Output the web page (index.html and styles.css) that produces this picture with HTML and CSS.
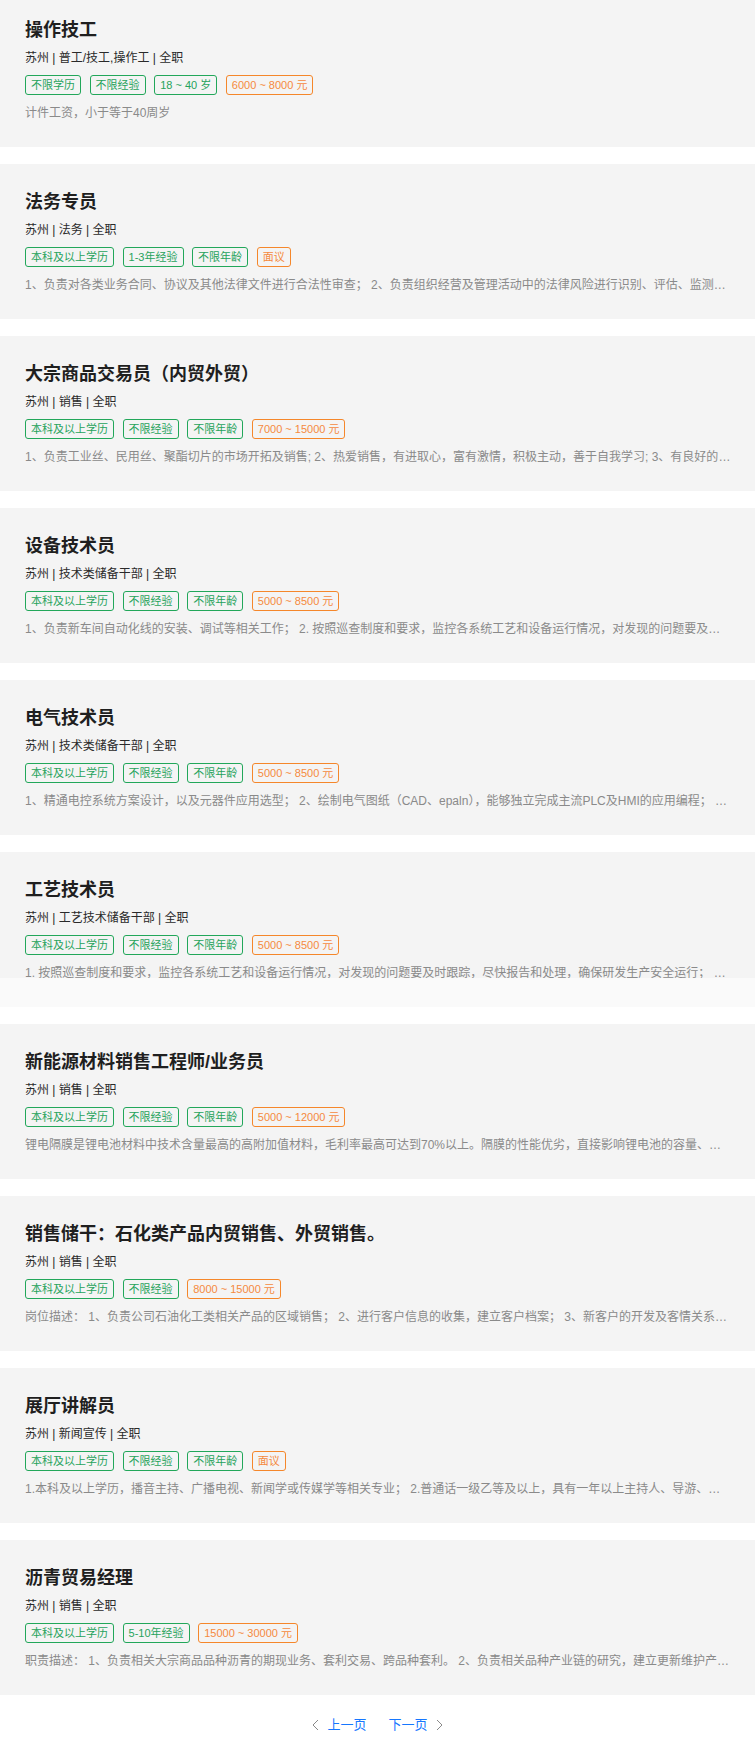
FILE: index.html
```html
<!DOCTYPE html>
<html lang="zh-CN">
<head>
<meta charset="utf-8">
<title>职位列表</title>
<link rel="stylesheet" href="styles.css">
</head>
<body>
<div class="list">
  <div class="card">
    <div class="title">操作技工</div>
    <div class="meta">苏州 | 普工/技工,操作工 | 全职</div>
    <div class="tags"><span class="tag">不限学历</span><span class="tag">不限经验</span><span class="tag">18 ~ 40 岁</span><span class="tag pay">6000 ~ 8000 元</span></div>
    <div class="desc">计件工资，小于等于40周岁</div>
  </div>
  <div class="card">
    <div class="title">法务专员</div>
    <div class="meta">苏州 | 法务 | 全职</div>
    <div class="tags"><span class="tag">本科及以上学历</span><span class="tag">1-3年经验</span><span class="tag">不限年龄</span><span class="tag pay">面议</span></div>
    <div class="desc">1、负责对各类业务合同、协议及其他法律文件进行合法性审查； 2、负责组织经营及管理活动中的法律风险进行识别、评估、监测和控制，提出法律意见；</div>
  </div>
  <div class="card">
    <div class="title">大宗商品交易员（内贸外贸）</div>
    <div class="meta">苏州 | 销售 | 全职</div>
    <div class="tags"><span class="tag">本科及以上学历</span><span class="tag">不限经验</span><span class="tag">不限年龄</span><span class="tag pay">7000 ~ 15000 元</span></div>
    <div class="desc">1、负责工业丝、民用丝、聚酯切片的市场开拓及销售; 2、热爱销售，有进取心，富有激情，积极主动，善于自我学习; 3、有良好的沟通能力和团队合作精神;</div>
  </div>
  <div class="card">
    <div class="title">设备技术员</div>
    <div class="meta">苏州 | 技术类储备干部 | 全职</div>
    <div class="tags"><span class="tag">本科及以上学历</span><span class="tag">不限经验</span><span class="tag">不限年龄</span><span class="tag pay">5000 ~ 8500 元</span></div>
    <div class="desc">1、负责新车间自动化线的安装、调试等相关工作； 2. 按照巡查制度和要求，监控各系统工艺和设备运行情况，对发现的问题要及时跟踪，尽快报告和处理；</div>
  </div>
  <div class="card">
    <div class="title">电气技术员</div>
    <div class="meta">苏州 | 技术类储备干部 | 全职</div>
    <div class="tags"><span class="tag">本科及以上学历</span><span class="tag">不限经验</span><span class="tag">不限年龄</span><span class="tag pay">5000 ~ 8500 元</span></div>
    <div class="desc">1、精通电控系统方案设计，以及元器件应用选型； 2、绘制电气图纸（CAD、epaln），能够独立完成主流PLC及HMI的应用编程； 3、负责现场调试工作；</div>
  </div>
  <div class="card">
    <div class="title">工艺技术员</div>
    <div class="meta">苏州 | 工艺技术储备干部 | 全职</div>
    <div class="tags"><span class="tag">本科及以上学历</span><span class="tag">不限经验</span><span class="tag">不限年龄</span><span class="tag pay">5000 ~ 8500 元</span></div>
    <div class="desc">1. 按照巡查制度和要求，监控各系统工艺和设备运行情况，对发现的问题要及时跟踪，尽快报告和处理，确保研发生产安全运行； 2. 负责工艺文件的编制；</div>
    <div class="fade"></div>
  </div>
  <div class="card">
    <div class="title">新能源材料销售工程师/业务员</div>
    <div class="meta">苏州 | 销售 | 全职</div>
    <div class="tags"><span class="tag">本科及以上学历</span><span class="tag">不限经验</span><span class="tag">不限年龄</span><span class="tag pay">5000 ~ 12000 元</span></div>
    <div class="desc">锂电隔膜是锂电池材料中技术含量最高的高附加值材料，毛利率最高可达到70%以上。隔膜的性能优劣，直接影响锂电池的容量、循环性能以及安全性能。</div>
  </div>
  <div class="card">
    <div class="title">销售储干：石化类产品内贸销售、外贸销售。</div>
    <div class="meta">苏州 | 销售 | 全职</div>
    <div class="tags"><span class="tag">本科及以上学历</span><span class="tag">不限经验</span><span class="tag pay">8000 ~ 15000 元</span></div>
    <div class="desc">岗位描述： 1、负责公司石油化工类相关产品的区域销售； 2、进行客户信息的收集，建立客户档案； 3、新客户的开发及客情关系维护；</div>
  </div>
  <div class="card">
    <div class="title">展厅讲解员</div>
    <div class="meta">苏州 | 新闻宣传 | 全职</div>
    <div class="tags"><span class="tag">本科及以上学历</span><span class="tag">不限经验</span><span class="tag">不限年龄</span><span class="tag pay">面议</span></div>
    <div class="desc">1.本科及以上学历，播音主持、广播电视、新闻学或传媒学等相关专业； 2.普通话一级乙等及以上，具有一年以上主持人、导游、展厅讲解员工作经验者优先；</div>
  </div>
  <div class="card">
    <div class="title">沥青贸易经理</div>
    <div class="meta">苏州 | 销售 | 全职</div>
    <div class="tags"><span class="tag">本科及以上学历</span><span class="tag">5-10年经验</span><span class="tag pay">15000 ~ 30000 元</span></div>
    <div class="desc">职责描述： 1、负责相关大宗商品品种沥青的期现业务、套利交易、跨品种套利。 2、负责相关品种产业链的研究，建立更新维护产业链数据库；</div>
  </div>
</div>
<div class="pager">
  <a class="page-link" href="#"><svg class="chev" viewBox="0 0 7 12" width="7" height="12"><path d="M6 1 L1 6 L6 11" fill="none" stroke="#8a8a8a" stroke-width="1"/></svg><span>上一页</span></a>
  <a class="page-link" href="#"><span>下一页</span><svg class="chev" viewBox="0 0 7 12" width="7" height="12"><path d="M1 1 L6 6 L1 11" fill="none" stroke="#8a8a8a" stroke-width="1"/></svg></a>
</div>
</body>
</html>
```

FILE: styles.css
```css
html, body {
  margin: 0;
  padding: 0;
  background: #ffffff;
}

body {
  font-family: "Liberation Sans", "Noto Sans CJK SC", sans-serif;
  color: #333;
  overflow: hidden;
}

.list {
  display: flex;
  flex-direction: column;
  gap: 17px;
  margin-top: -8px;
}

.card {
  position: relative;
  box-sizing: border-box;
  height: 155px;
  background: #f4f4f4;
  padding: 26px 24px 0 25px;
  display: flex;
  flex-direction: column;
}

.title {
  font-size: 18px;
  line-height: 24px;
  font-weight: 700;
  color: #1f1f1f;
}

.meta {
  margin-top: 7px;
  font-size: 12px;
  line-height: 18px;
  color: #2a2a2a;
  white-space: pre;
}

.tags {
  margin-top: 8px;
  display: flex;
  gap: 8.6px;
}

.tag {
  box-sizing: border-box;
  height: 20px;
  padding: 0 5px;
  border: 1px solid #22a75a;
  border-radius: 3px;
  color: #27a35c;
  font-size: 11px;
  line-height: 18px;
  white-space: nowrap;
}

.tag.pay {
  border-color: #f5872b;
  color: #f58a3e;
}

.desc {
  margin-top: 9px;
  font-size: 12px;
  line-height: 18px;
  color: #8a8a8a;
  white-space: nowrap;
  overflow: hidden;
  text-overflow: ellipsis;
}

.fade {
  position: absolute;
  left: 0;
  right: 0;
  top: 126px;
  bottom: 0;
  background: #fafafa;
}

.pager {
  display: flex;
  justify-content: center;
  gap: 22px;
  padding-top: 20px;
  height: 20px;
}

.page-link {
  display: flex;
  align-items: center;
  gap: 8px;
  font-size: 13px;
  line-height: 20px;
  color: #1677ff;
  text-decoration: none;
}

.chev {
  display: block;
}
```
